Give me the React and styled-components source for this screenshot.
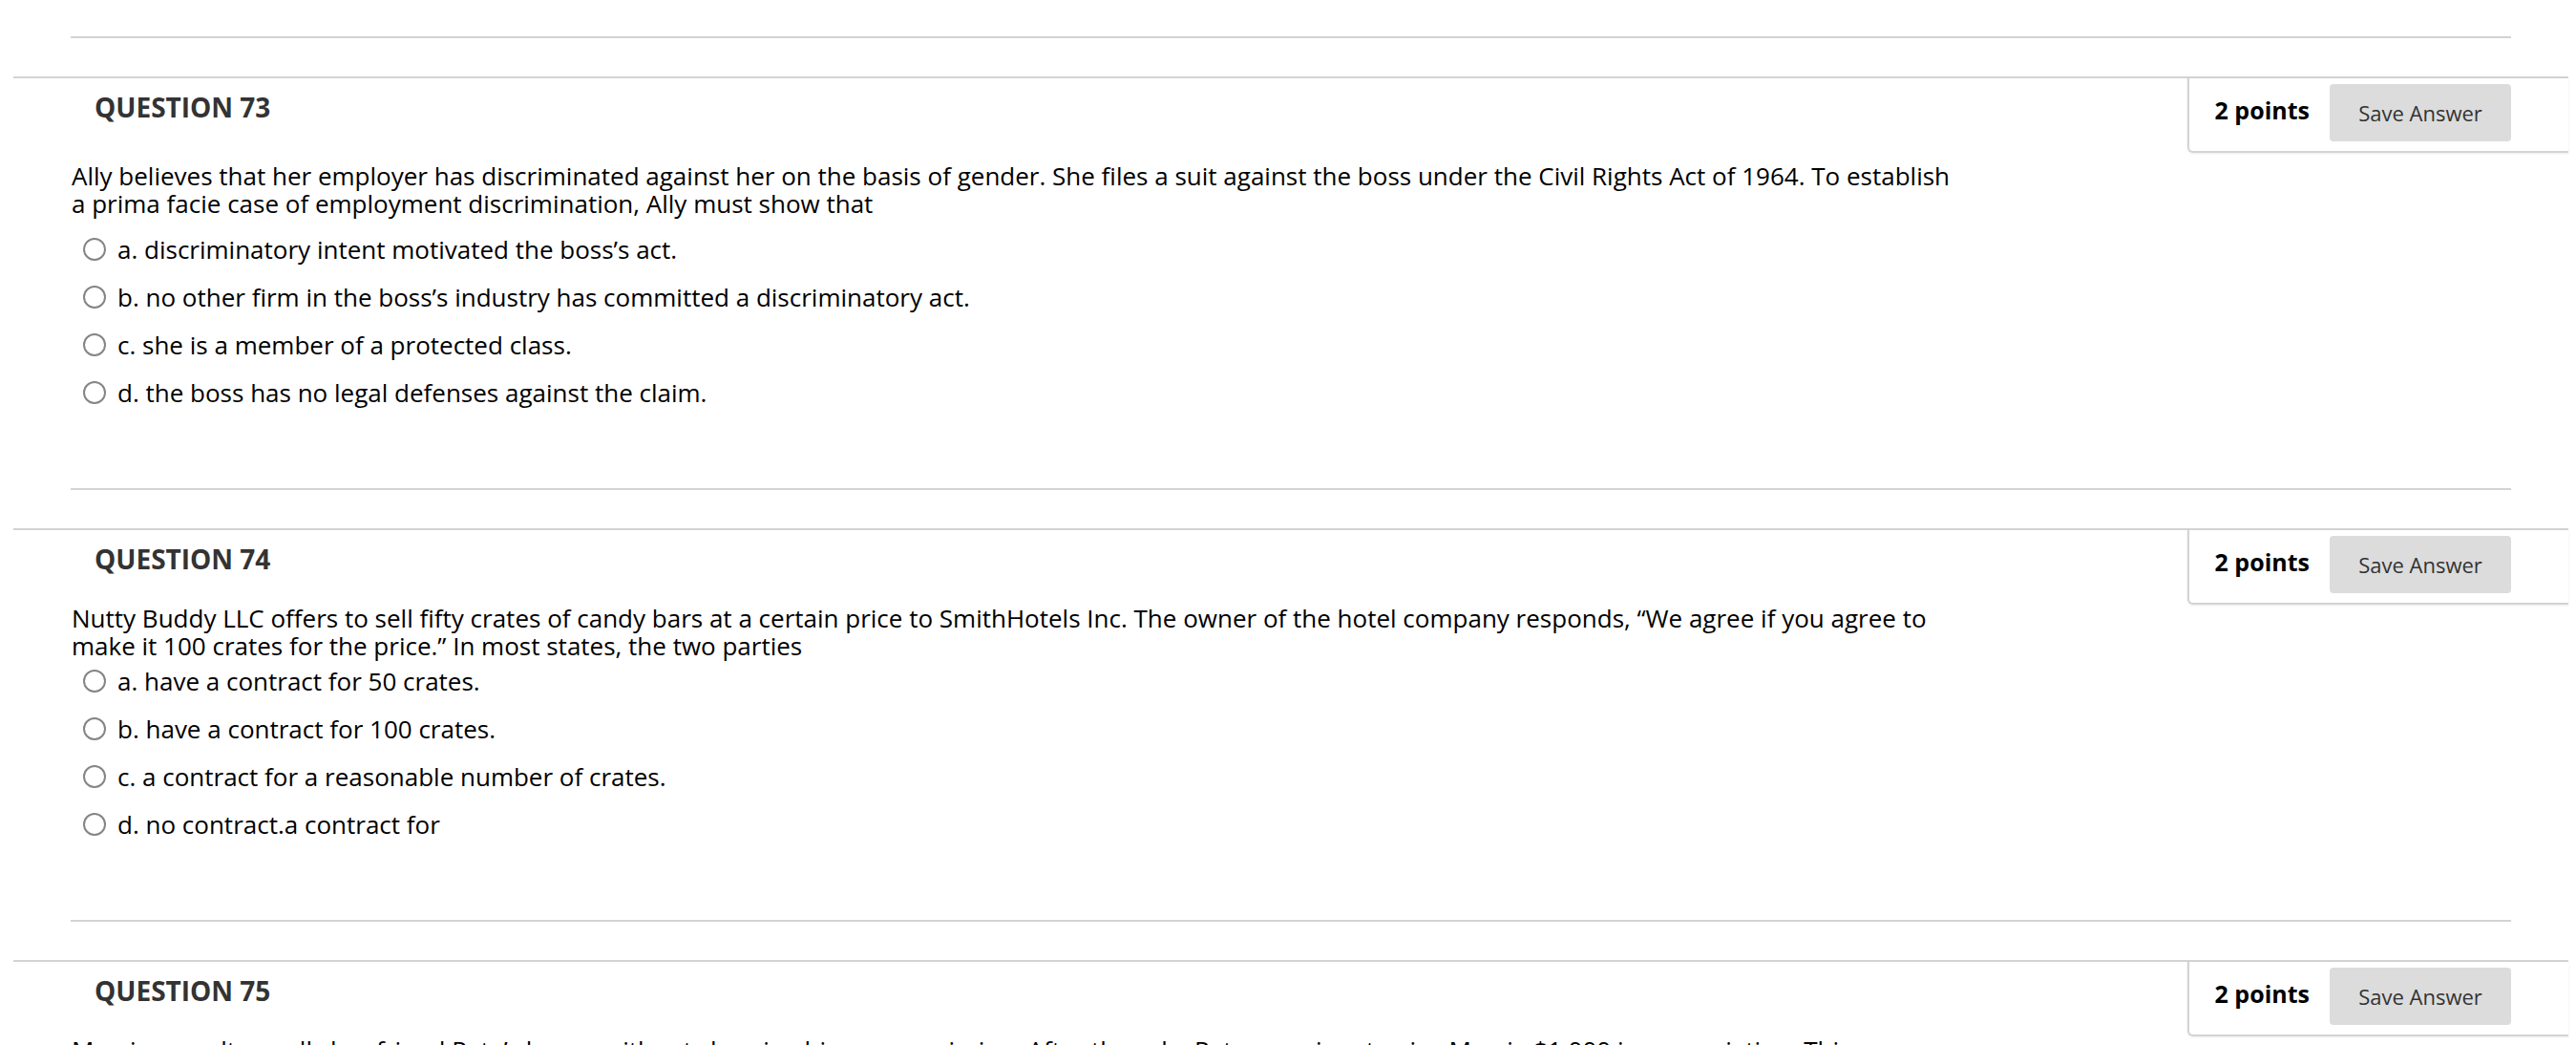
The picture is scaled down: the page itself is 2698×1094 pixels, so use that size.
import React from "react";
import styled, { createGlobalStyle } from "styled-components";

const questions = [
  {
    num: 73,
    spaced: true,
    lines: [
      "Ally believes that her employer has discriminated against her on the basis of gender. She files a suit against the boss under the Civil Rights Act of 1964. To establish",
      "a prima facie case of employment discrimination, Ally must show that",
    ],
    options: [
      "a. discriminatory intent motivated the boss’s act.",
      "b. no other firm in the boss’s industry has committed a discriminatory act.",
      "c. she is a member of a protected class.",
      "d. the boss has no legal defenses against the claim.",
    ],
  },
  {
    num: 74,
    lines: [
      "Nutty Buddy LLC offers to sell fifty crates of candy bars at a certain price to SmithHotels Inc. The owner of the hotel company responds, “We agree if you agree to",
      "make it 100 crates for the price.” In most states, the two parties",
    ],
    options: [
      "a. have a contract for 50 crates.",
      "b. have a contract for 100 crates.",
      "c. a contract for a reasonable number of crates.",
      "d. no contract.a contract for",
    ],
  },
  {
    num: 75,
    lines: [
      "Marcia, a realtor, sells her friend Pete’s house without charging him a commission. After the sale, Pete promises to give Marcia $1,000 in appreciation. This",
    ],
    options: [],
  },
];

export default function App() {
  return (
    <>
      <GlobalStyle />
      <Page>
        <Divider />
        {questions.map((q) => (
          <React.Fragment key={q.num}>
            <Section>
              <Header>
                <Label>QUESTION {q.num}</Label>
                <PointsBox>
                  <Points>2 points</Points>
                  <SaveButton type="button">Save Answer</SaveButton>
                </PointsBox>
              </Header>
              <Body>
                <QuestionText $spaced={q.spaced}>
                  {q.lines.map((line, i) => (
                    <React.Fragment key={i}>
                      {i > 0 && <br />}
                      {line}
                    </React.Fragment>
                  ))}
                </QuestionText>
                {q.options.length > 0 && (
                  <Options>
                    {q.options.map((opt) => (
                      <Option key={opt}>
                        <Radio />
                        {opt}
                      </Option>
                    ))}
                  </Options>
                )}
              </Body>
            </Section>
            <Divider />
          </React.Fragment>
        ))}
      </Page>
    </>
  );
}

// styling
const GlobalStyle = createGlobalStyle`
  html, body {
    margin: 0;
    padding: 0;
    background: #fff;
  }
  body {
    font-family: "Open Sans", "Liberation Sans", Arial, sans-serif;
    overflow: hidden;
  }
`;

const Page = styled.div`
  padding: 38px 8px 0 14px;
`;

const Divider = styled.hr`
  height: 0;
  margin: 0 60px;
  border: 0;
  border-top: 2px solid #d3d3d3;
`;

const Section = styled.section`
  margin-top: 40px;
  border-top: 2px solid #d3d3d3;
`;

const Header = styled.div`
  display: flex;
  justify-content: space-between;
  align-items: flex-start;
  height: 78px;
`;

const Label = styled.h2`
  margin: 13px 0 0 85px;
  font-size: 28px;
  line-height: 34px;
  font-weight: 700;
  color: #333;
`;

const PointsBox = styled.div`
  display: flex;
  align-items: center;
  gap: 21px;
  padding: 6px 60px 10px 27px;
  background: #fff;
  border-left: 2px solid #d3d3d3;
  border-bottom: 2px solid #d3d3d3;
  border-bottom-left-radius: 6px;
  box-shadow: 0 1px 3px rgba(0, 0, 0, 0.08);
`;

const Points = styled.span`
  padding-bottom: 6px;
  font-size: 25px;
  font-weight: 700;
  color: #000;
`;

const SaveButton = styled.button`
  width: 190px;
  height: 60px;
  border: 0;
  border-radius: 4px;
  background: #dcdcdc;
  color: #333;
  font-family: "Open Sans", "Liberation Sans", Arial, sans-serif;
  font-size: 22px;
  cursor: pointer;
`;

const Body = styled.div`
  padding: 0 0 86px 61px;
`;

const QuestionText = styled.p`
  margin: ${(p) => (p.$spaced ? "10px 0 11px" : "0")};
  font-size: 26px;
  line-height: 29px;
  color: #000;
  white-space: nowrap;
`;

const Options = styled.div`
  display: flex;
  flex-direction: column;
  gap: 21px;
  padding: 7px 0 0 12px;
`;

const Option = styled.label`
  display: flex;
  align-items: center;
  gap: 12px;
  height: 29px;
  font-size: 26px;
  color: #000;
`;

const Radio = styled.span`
  box-sizing: border-box;
  flex: none;
  width: 24px;
  height: 24px;
  border: 2px solid #858585;
  border-radius: 50%;
  background: #fff;
`;
